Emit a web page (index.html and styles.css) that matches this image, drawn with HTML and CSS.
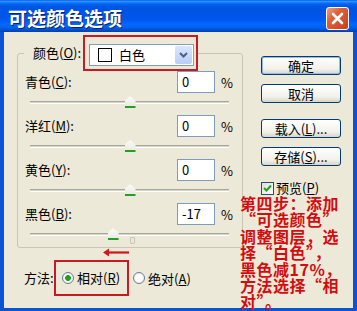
FILE: index.html
```html
<!DOCTYPE html>
<html lang="zh-CN">
<head>
    <meta charset="UTF-8">
    <meta name="viewport" content="width=device-width, initial-scale=1.0">
    <title>可选颜色选项</title>
    <link rel="stylesheet" href="styles.css">
</head>
<body>
    <div class="window">
        <div class="titlebar">
            <span class="title">可选颜色选项</span>
            <span class="close">
                <svg width="13" height="13" viewBox="0 0 13 13">
                    <path d="M2 2 L11 11 M11 2 L2 11" stroke="#fff" stroke-width="2.6" stroke-linecap="round"/>
                </svg>
            </span>
        </div>

        <div class="client">
            <div class="main">
                <fieldset class="group">
                    <legend class="group-head">
                        <div class="head-inner">
                            <span class="label">颜色(<u>O</u>):</span>
                            <span class="mark mark-select">
                                <span class="select">
                                    <span class="swatch"></span>
                                    <span class="select-text">白色</span>
                                    <span class="select-btn">
                                        <svg width="9" height="6" viewBox="0 0 9 6">
                                            <path d="M1 1 L4.5 4.5 L8 1" fill="none" stroke="#4d6185" stroke-width="2"/>
                                        </svg>
                                    </span>
                                </span>
                            </span>
                        </div>
                    </legend>

                    <div class="row">
                        <div class="row-top">
                            <span class="label">青色(<u>C</u>):</span>
                            <span class="field">0</span>
                            <span class="unit">%</span>
                        </div>
                        <div class="slider">
                            <span class="track"></span>
                            <span class="thumb" style="left: 50%"></span>
                        </div>
                    </div>

                    <div class="row">
                        <div class="row-top">
                            <span class="label">洋红(<u>M</u>):</span>
                            <span class="field">0</span>
                            <span class="unit">%</span>
                        </div>
                        <div class="slider">
                            <span class="track"></span>
                            <span class="thumb" style="left: 50%"></span>
                        </div>
                    </div>

                    <div class="row">
                        <div class="row-top">
                            <span class="label">黄色(<u>Y</u>):</span>
                            <span class="field">0</span>
                            <span class="unit">%</span>
                        </div>
                        <div class="slider">
                            <span class="track"></span>
                            <span class="thumb" style="left: 50%"></span>
                        </div>
                    </div>

                    <div class="row">
                        <div class="row-top">
                            <span class="label">黑色(<u>B</u>):</span>
                            <span class="field">-17</span>
                            <span class="unit">%</span>
                        </div>
                        <div class="slider">
                            <span class="track"></span>
                            <span class="tick"></span>
                            <span class="thumb" style="left: 41.5%"></span>
                        </div>
                    </div>
                </fieldset>

                <div class="method">
                    <span class="label">方法:</span>
                    <span class="mark mark-radio">
                        <span class="radio on"></span>相对(<u>R</u>)
                    </span>
                    <span class="radio-item">
                        <span class="radio"></span>绝对(<u>A</u>)
                    </span>
                </div>
            </div>

            <div class="side">
                <button class="btn btn-default">确定</button>
                <button class="btn">取消</button>
                <button class="btn btn-gap">载入(<u>L</u>)...</button>
                <button class="btn">存储(<u>S</u>)...</button>
                <div class="check">
                    <span class="box">
                        <svg width="9" height="9" viewBox="0 0 9 9">
                            <path d="M1 4 L3.5 6.5 L8 1.5" fill="none" stroke="#21a121" stroke-width="2"/>
                        </svg>
                    </span>
                    预览(<u>P</u>)
                </div>
            </div>
        </div>

        <!-- annotation drawn over the screenshot -->
        <div class="note">第四步：添加<br>“可选颜色”<br>调整图层，选<br>择“白色”，<br>黑色减17%，<br>方法选择“相<br>对”。</div>
        <svg class="arrow" width="28" height="9" viewBox="0 0 28 9">
            <path d="M27 4.5 H4" stroke="#d6141c" stroke-width="2.2"/>
            <path d="M1 4.5 L7 0.5 L7 8.5 Z" fill="#d6141c"/>
        </svg>
    </div>
</body>
</html>
```

FILE: styles.css
```css
body {
    margin: 0;
    font-family: "Noto Sans CJK SC", "Liberation Sans", sans-serif;
    font-size: 13px;
    color: #000;
}
.window {
    position: relative;
    width: 357px;
    height: 311px;
    display: flex;
    flex-direction: column;
    background: #0b52d4;
    overflow: hidden;
}
.titlebar {
    height: 32px;
    flex: none;
    display: flex;
    justify-content: space-between;
    padding: 0 8px;
    background: linear-gradient(to bottom, #0058ee 0%, #3593ff 4%, #288eff 6%, #127dff 8%, #036ffc 10%, #0262ee 14%, #0057e5 20%, #0054e3 24%, #0055eb 56%, #005bf5 66%, #026afe 76%, #0062ef 86%, #0052d6 92%, #0040ab 100%);
}
.title {
    color: white;
    font-size: 19px;
    font-weight: bold;
    line-height: 32px;
    padding-top: 2px;
    text-shadow: 1px 1px #0a246a;
}
.close {
    width: 23px;
    height: 23px;
    margin-top: 7px;
    box-sizing: border-box;
    border: 1px solid white;
    border-radius: 3px;
    background: linear-gradient(135deg, #f0a080 0%, #e0603a 35%, #c9401a 100%);
    display: flex;
    align-items: center;
    justify-content: center;
}
.client {
    flex: 1;
    margin: 0 4px 3px;
    background: #ece9d8;
    display: flex;
}
.main {
    padding-left: 13px;
    width: 226px;
}
.group {
    box-sizing: border-box;
    width: 226px;
    margin: 3px 0 0;
    padding: 0 6px;
    border: 1px solid #c9c6b4;
    border-radius: 3px;
    min-width: 0;
}
.group-head {
    padding: 0 0 0 9px;
}
.head-inner {
    display: flex;
    align-items: center;
}
.label {
    line-height: 18px;
    white-space: nowrap;
}
.mark {
    border: 2px solid #c81a22;
}
.mark-select {
    margin-left: 2px;
    padding: 7px 2px 3px 4px;
}
.select {
    display: flex;
    align-items: center;
    box-sizing: border-box;
    width: 105px;
    height: 22px;
    background: white;
    border: 1px solid #7f9db9;
}
.swatch {
    width: 12px;
    height: 12px;
    margin-left: 8px;
    border: 1px solid #000;
    background: white;
}
.select-text {
    flex: 1;
    margin-left: 7px;
    line-height: 18px;
}
.select-btn {
    width: 17px;
    height: 18px;
    margin-right: 1px;
    border-radius: 2px;
    background: linear-gradient(#dbe6fd, #b9cdf7);
    display: flex;
    align-items: center;
    justify-content: center;
}
.row {
    margin-left: 1px;
}
.row-top {
    display: grid;
    grid-template-columns: 1fr 38px 21px;
    align-items: center;
    height: 22px;
}
.field {
    box-sizing: border-box;
    height: 22px;
    padding-left: 4px;
    background: white;
    border: 1px solid #7f9db9;
    line-height: 20px;
}
.unit {
    padding-left: 6px;
}
.slider {
    position: relative;
    height: 22px;
    margin: 0 7px 0 5px;
}
.track {
    display: block;
    position: relative;
    top: 8px;
    height: 1px;
    border-top: 1px solid #a9a89c;
    border-bottom: 1px solid #ffffff;
    background: #d6d3c4;
}
.tick {
    position: absolute;
    left: 50%;
    top: 12px;
    width: 3px;
    height: 5px;
    border: 1px solid #c7c5b8;
    border-radius: 1px;
}
.thumb {
    position: absolute;
    top: 3px;
    width: 11px;
    height: 12px;
    margin-left: -5px;
    background: linear-gradient(#fbfbf8, #e9e7de);
    clip-path: polygon(50% 0, 100% 38%, 100% 100%, 0 100%, 0 38%);
    box-shadow: inset 0 -2px #21a121;
}
.method {
    display: flex;
    align-items: center;
    margin: 12px 0 0 7px;
}
.method .label {
    width: 30px;
}
.mark-radio {
    display: flex;
    align-items: center;
    padding: 7px 7px 7px 6px;
    line-height: 18px;
}
.radio-item {
    display: flex;
    align-items: center;
    margin-left: 4px;
}
.radio {
    box-sizing: border-box;
    width: 12px;
    height: 12px;
    margin-right: 3px;
    border: 1px solid #6a7d98;
    border-radius: 50%;
    background: radial-gradient(circle, #ffffff 40%, #e4e2d8 100%);
}
.radio.on {
    background: radial-gradient(circle, #21a121 0, #21a121 2.6px, #ffffff 3.2px, #ffffff 40%, #e4e2d8 100%);
}
.side {
    margin-left: 18px;
    padding-top: 24px;
    display: flex;
    flex-direction: column;
    align-items: flex-start;
}
.btn {
    box-sizing: border-box;
    width: 80px;
    height: 19px;
    margin-bottom: 9px;
    padding: 0;
    font-family: inherit;
    font-size: 13px;
    line-height: 16px;
    border: 1px solid #003c74;
    border-radius: 3px;
    background: linear-gradient(#ffffff, #f2f1ea 70%, #d8d5c6);
    color: black;
}
.btn-default {
    box-shadow: inset 0 0 0 1px #99b8ee;
}
.btn-gap {
    margin-top: 7px;
}
.check {
    display: flex;
    align-items: center;
    margin-top: 6px;
    line-height: 14px;
}
.box {
    box-sizing: border-box;
    width: 13px;
    height: 13px;
    margin-right: 2px;
    border: 1px solid #1c5180;
    background: linear-gradient(135deg, #e0ded4, #ffffff);
    display: flex;
    align-items: center;
    justify-content: center;
}
.note {
    position: absolute;
    left: 240px;
    top: 195px;
    color: #d40c10;
    font-size: 16px;
    font-weight: bold;
    line-height: 16.4px;
    letter-spacing: 0.5px;
}
.arrow {
    position: absolute;
    left: 102px;
    top: 248px;
}
```
